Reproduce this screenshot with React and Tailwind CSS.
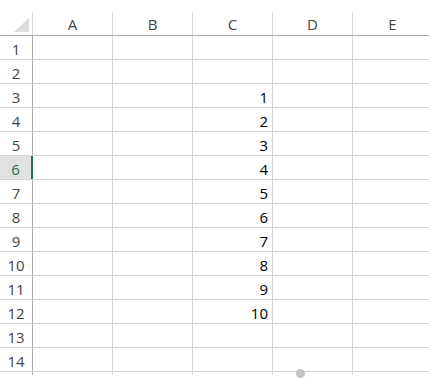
import React from 'react';

const cols = ['A', 'B', 'C', 'D', 'E'];
const rows = Array.from({ length: 14 }, (_, i) => i + 1);
// values live in column C, rows 3..12
const values = { 3: 1, 4: 2, 5: 3, 6: 4, 7: 5, 8: 6, 9: 7, 10: 8, 11: 9, 12: 10 };

export default function App() {
  return (
    <div className="w-[429px] h-[378px] overflow-hidden bg-white relative text-[15px] text-[#262626]" style={{ fontFamily: '"Open Sans", "Noto Sans", sans-serif' }}>
      <div className="h-[12px]" />

      {/* Column headers */}
      <div className="flex h-[24px] border-b border-[#ababab]">
        <div className="w-[33px] shrink-0 relative border-r border-[#dadada]">
          <div className="absolute right-[3px] bottom-[3px] w-0 h-0 border-l-[15px] border-l-transparent border-b-[14px] border-b-[#dcdcdc]" />
        </div>
        {cols.map((c) => (
          <div key={c} className="w-[80px] shrink-0 flex items-center justify-center border-r border-[#dadada] text-[#444] pt-[2px]">
            {c}
          </div>
        ))}
      </div>

      {/* Rows */}
      {rows.map((r) => {
        const selected = r === 6;
        return (
          <div key={r} className="flex h-[24px] border-b border-[#d4d4d4]">
            <div
              className={
                selected
                  ? 'w-[33px] shrink-0 flex items-center justify-center bg-[#e1e1e1] text-[#217346] border-r-2 border-[#217346] pt-[3px]'
                  : 'w-[33px] shrink-0 flex items-center justify-center border-r border-[#ababab] text-[#444] pt-[3px]'
              }
            >
              {r}
            </div>
            {cols.map((c) => (
              <div key={c} className="w-[80px] shrink-0 flex items-center justify-end pr-[4px] pt-[3px] border-r border-[#d4d4d4] text-black">
                {c === 'C' && values[r] !== undefined ? values[r] : ''}
              </div>
            ))}
          </div>
        );
      })}

      {/* partial next row */}
      <div className="flex h-[3px]">
        <div className="w-[33px] shrink-0 border-r border-[#ababab]" />
        {cols.map((c) => (
          <div key={c} className="w-[80px] shrink-0 border-r border-[#d4d4d4]" />
        ))}
      </div>

      {/* scroll handle */}
      <div className="absolute left-[296px] top-[369px] w-[9px] h-[9px] rounded-full bg-[#c4c4c4]" />
    </div>
  );
}
